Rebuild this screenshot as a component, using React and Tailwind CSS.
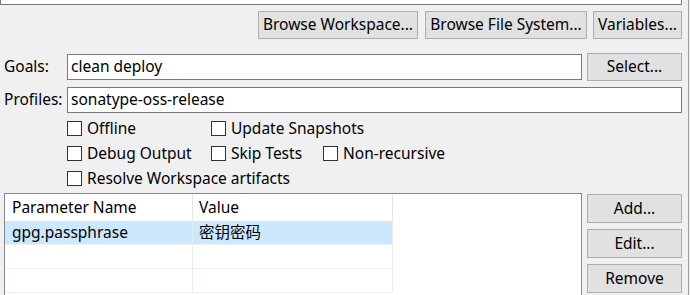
const font = { fontFamily: '"Noto Sans", "Noto Sans CJK SC", sans-serif' };

function Btn({ w, h = "h-[28px]", children }) {
  return (
    <div className={`${w} ${h} flex items-center justify-center border border-[#adadad] bg-[#e1e1e1] text-[15.5px] leading-none text-black`}>
      {children}
    </div>
  );
}

function Check({ label, w }) {
  return (
    <div className={`flex items-center ${w}`}>
      <div className="h-[15px] w-[15px] border border-[#333] bg-white" />
      <span className="ml-[5px] text-[15.5px] leading-none">{label}</span>
    </div>
  );
}

const rows = [
  { name: "gpg.passphrase", value: "密钥密码", sel: true },
  { name: "", value: "" },
  { name: "", value: "" },
];

export default function App() {
  return (
    <div className="flex h-[295px] w-[690px] overflow-hidden bg-[#f0f0f0] text-black" style={font}>
      <div className="w-[688px]">
        <div className="h-[5px] w-[682px] overflow-hidden border-x border-b border-[#7a7a7a] bg-white">
          <div className="-mt-[22px] pl-[6px] text-[15.5px] leading-[20px]">${"{"}project_loc:/gpg_plugin_example{"}"}</div>
        </div>

        <div className="mt-[6px] flex h-[28px] items-center">
          <div className="ml-[258px]"><Btn w="w-[160px]">Browse Workspace...</Btn></div>
          <div className="ml-[7px]"><Btn w="w-[162px]">Browse File System...</Btn></div>
          <div className="ml-[6px]"><Btn w="w-[89px]">Variables...</Btn></div>
        </div>

        <div className="mt-[14px] flex h-[28px] items-center">
          <span className="ml-[4px] w-[63px] text-[15.5px] leading-none">Goals:</span>
          <div className="flex h-[26px] w-[515px] items-center border border-[#7a7a7a] bg-white px-[3px] text-[15.5px] leading-none">clean deploy</div>
          <div className="ml-[5px]"><Btn w="w-[95px]">Select...</Btn></div>
        </div>

        <div className="mt-[6px] flex h-[26px] items-center">
          <span className="ml-[4px] w-[63px] text-[15.5px] leading-none">Profiles:</span>
          <div className="flex h-[26px] w-[615px] items-center border border-[#7a7a7a] bg-white px-[3px] text-[15.5px] leading-none">sonatype-oss-release</div>
        </div>

        <div className="ml-[67px] mt-[8px] flex h-[15px]">
          <Check w="w-[144px]" label="Offline" />
          <Check label="Update Snapshots" />
        </div>
        <div className="ml-[67px] mt-[10px] flex h-[15px]">
          <Check w="w-[144px]" label="Debug Output" />
          <Check w="w-[112px]" label="Skip Tests" />
          <Check label="Non-recursive" />
        </div>
        <div className="ml-[67px] mt-[10px] flex h-[15px]">
          <Check label="Resolve Workspace artifacts" />
        </div>

        <div className="mt-[7px] flex">
          <div className="ml-[4px] h-[110px] w-[578px] border border-[#828790] bg-white">
            <div className="flex h-[27px] items-center">
              <div className="flex h-full w-[188px] items-center border-r border-[#e5e5e5] pl-[7px] text-[15.5px] leading-none">Parameter Name</div>
              <div className="flex h-full w-[200px] items-center border-r border-[#e5e5e5] pl-[6px] text-[15.5px] leading-none">Value</div>
            </div>
            {rows.map((r, i) => (
              <div key={i} className="flex h-[24px] w-[388px] border-b border-[#f0f0f0]">
                <div className={`flex h-full w-[188px] items-center border-r border-[#e8ecf2] pl-[7px] text-[15.5px] leading-none ${r.sel ? "bg-[#cce8ff]" : ""}`}>{r.name}</div>
                <div className={`flex h-full w-[200px] items-center border-r border-[#e8ecf2] pl-[6px] text-[15.5px] leading-none ${r.sel ? "bg-[#cce8ff]" : ""}`}>{r.value}</div>
              </div>
            ))}
          </div>
          <div className="ml-[5px] mt-[1px] flex flex-col gap-[6px]">
            <Btn w="w-[95px]" h="h-[29px]">Add...</Btn>
            <Btn w="w-[95px]" h="h-[29px]">Edit...</Btn>
            <Btn w="w-[95px]" h="h-[29px]">Remove</Btn>
          </div>
        </div>
      </div>
      <div className="h-full w-px bg-[#a0a0a0]" />
    </div>
  );
}
